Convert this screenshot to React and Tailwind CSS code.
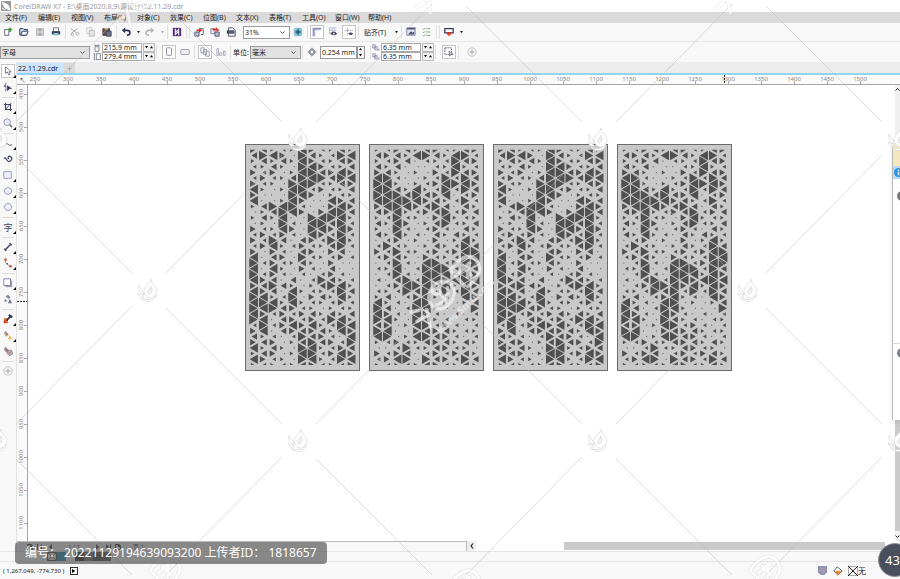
import { Fragment } from 'react';

const MENUS = ['文件(F)', '编辑(E)', '视图(V)', '布局(L)', '对象(C)', '效果(C)', '位图(B)', '文本(X)', '表格(T)', '工具(O)', '窗口(W)', '帮助(H)'];

// opening size of every triangle, one string per half row
const PANEL_A = [
    '22111321121', '23320321133', '12121321122', '11210332112', '21201332232', '12112333233', '21103331122',
    '31013312112', '20003320111', '30013200322', '12333100232', '01233202332', '12130033331', '01031033231',
    '21132033232', '12121032131', '21320221331', '12311211231', '20210220220', '30220311121', '31211210200',
    '30310210200', '31210101210', '32202013211', '22321012331', '32203111132', '33113022131', '33313111121',
    '33322110111', '32121221212', '33022121331', '13123231133', '23022222132', '21101322103', '22201232213',
    '31210331122', '12201331232', '32110331133', '11111221112',
];

const PANEL_B = [
    '11221221122', '22213321331', '11220111322', '21200011311', '22101021322', '33100113132', '33101123332',
    '33213113132', '33323223012', '33333221131', '23332232021', '22311223122', '11311023111', '21320123112',
    '10310121021', '21311021211', '01201020131', '13110121132', '21311121233', '12210211133', '01310331233',
    '11301333132', '01310333132', '10231332333', '01233323132', '11132313132', '12012311032', '31103301012',
    '32013310003', '32103210101', '33103211011', '22013312101', '33002222111', '33013322101', '11211222121',
    '00131122110', '21220121221', '12330322132', '11111221121',
];

const SCALE = [0.14, 0.36, 0.58, 0.86];

function Panel({ rows, name }) {
    const shapes = [];
    rows.forEach((row, r) => {
        [...row].forEach((size, c) => {
            const k = SCALE[Number(size)];
            const dir = (r + c) % 2 === 0 ? 1 : -1;
            const cx = 7.6 + c * 9.75 - dir * 1.6;
            const cy = 4.8 + r * 5.66;
            shapes.push(
                `M${cx - dir * 3.2 * k} ${cy - 5.6 * k}V${cy + 5.6 * k}L${cx + dir * 6.4 * k} ${cy}Z`
            );
        });
    });
    return (
        <svg role="img" aria-label={name} viewBox="0 0 113 225" className="h-[227px] w-[115px] shrink-0 border border-[#6b6b6b] bg-[#c9c9c9]">
            <clipPath id={name}>
                <path d="M3 4.800H110V219.900H3Z" />
            </clipPath>
            <path d={shapes.join('')} fill="#505050" clipPath={`url(#${name})`} />
        </svg>
    );
}

const ICONS = {
    newDoc: <><path d="M2 3h5v7H2z" fill="#fff" stroke="#555a70" /><path d="M6 3h5M8.500 1v5" stroke="#3b9b35" strokeWidth="2" /></>,
    open: <path d="M1 10V2h4l1 1h4v2H4L2 10h7l2-5" fill="#e4e8f4" stroke="#30385c" strokeWidth="1.2" />,
    save: <><path d="M2 2h8v8H2z" fill="#d5d5d8" stroke="#aaaab0" /><path d="M4 2h4v3H4zM4 7h4v3H4z" fill="#aaaab0" /></>,
    print: <><path d="M3 5V1h6v4" fill="#fff" stroke="#555a70" /><path d="M1 5h10v4H1z" fill="#30385c" /><path d="M3 7h6v3H3z" fill="#87c2bd" /></>,
    cut: <><path d="M1 2l7 5M1 8l8-6" stroke="#aaaaae" strokeWidth="1.200" /><circle cx="9" cy="8" r="1.500" stroke="#aaaaae" /><circle cx="3" cy="9" r="1.500" stroke="#aaaaae" /></>,
    copy: <><path d="M1 1h6v7H1z" stroke="#c4c4c8" /><path d="M4 4h6v7H4z" fill="#e5e5e7" stroke="#b4b4b8" /></>,
    paste: <><path d="M1 2h8v8H1z" fill="#5b5147" stroke="#463c34" /><path d="M3 1h4v2H3z" fill="#d8bc80" /><path d="M5 5h6v6H5z" fill="#6c7085" stroke="#3c4058" /></>,
    undo: <><path d="M3 4h4c5 0 5 6 0 6" stroke="#30385c" strokeWidth="2" /><path d="M1 4l4-3.500v7z" fill="#30385c" /></>,
    redo: <><path d="M9 4H5c-5 0-5 6 0 6" stroke="#b7b7bc" strokeWidth="2" /><path d="M11 4L7 .5v7z" fill="#b7b7bc" /></>,
    connect: <><path d="M1 1h10v10H1z" fill="#5a2c86" /><path d="M4 2v8M8 2v8M8 3L4 6h4l-4 3" stroke="#fff" strokeWidth="1.200" /></>,
    importing: <><path d="M1 6h5v5H1z" fill="#b8bdd1" stroke="#454b6a" /><path d="M7 2h4v7H8" fill="#fff" stroke="#454b6a" /><path d="M3 4h4" stroke="#d93025" strokeWidth="2" /><path d="M6 1l4 3-4 3z" fill="#d93025" /></>,
    exporting: <><path d="M1 2h5v6H1z" fill="#e1e4ee" stroke="#7a809c" /><path d="M6 6h5v5H6z" fill="#b8bdd1" stroke="#454b6a" /><path d="M3 3h5" stroke="#d93025" strokeWidth="2" /><path d="M7 0l4 4-3 2z" fill="#d93025" /></>,
    pdf: <><path d="M3 1h5l3 3v7H3z" fill="#fff" stroke="#33384e" /><path d="M1 4h9v4H1z" fill="#33384e" /><path d="M3 6h1M5.500 6h1M8 6h1" stroke="#fff" /></>,
    full: <><rect x="1" y="1" width="10" height="10" rx="2" fill="#8ac5dc" /><path d="M6 2v8M2 6h8" stroke="#244f70" /><path d="M4 4h4v4H4z" fill="#31617f" /></>,
    ruler: <><path d="M2 11V2h9" stroke="#8c97bd" strokeWidth="2.500" /><path d="M5 4v1M8 4v1M4 7h1M4 10h1" stroke="#9ca4c5" /></>,
    gridEye: <><path d="M1 1h9M1 4h9M1 7h4M2 1v8M5 1v7M8 1v3" stroke="#b6bbd0" /><path d="M3 8q4-5 8 0q-4 4-8 0z" fill="#41465e" /><circle cx="7" cy="8" r="1" fill="#fff" /></>,
    guideEye: <><path d="M4 1v10M1 4h10" stroke="#8990ad" strokeDasharray="2 1" /><path d="M5 8q3-3 6 0q-3 3-6 0z" fill="#41465e" /></>,
    options: <><path d="M1 1h10v9H1z" fill="#dfe3f0" stroke="#7a81a0" /><path d="M1 2h10" stroke="#50587a" strokeWidth="2" /><path d="M3 8l3-3 2 2 2-2v4H3z" fill="#50587a" /></>,
    checks: <path d="M1 2l1 1 2-2M5 2h5M1 6l1 1 2-2M5 6h5M1 10l1 1 2-2M5 10h5" stroke="#6aa06a" />,
    launcher: <><path d="M1 2h10v5H1z" fill="#fff" stroke="#30385c" strokeWidth="1.500" /><path d="M4 6h4v2h1l-3 3-3-3h1z" fill="#d93025" /><path d="M5 10l1-2 1 2-1 1z" fill="#f09a3e" /></>,
    portrait: <rect x="3" y="1" width="6" height="9" rx="1" fill="#fff" stroke="#7b7f92" />,
    landscape: <rect x="1" y="3" width="10" height="6" rx="1" fill="#f0f0f4" stroke="#8b8f9f" />,
    pages: <path d="M1 1h4v6H1zM4 3h4v6H4zM7 5h4v6H7z" fill="#fff" stroke="#8b90a4" />,
    pageRow: <path d="M1 2h2v8H1zM4 7h3v3H4zM9 5h2v5H9z" stroke="#a2a5b3" />,
    nudge: <path d="M6 1l2 2H4zM6 11L4 9h4zM1 6l2-2v4zM11 6L9 4v4zM4 4h4v4H4z" stroke="#5d6278" strokeWidth=".8" fill="#fff" />,
    dup: <path d="M1 1h4v5H1zM4 4h4v5H4zM9 7l2 3M11 7l-2 3" fill="#d9dce6" stroke="#70758a" strokeWidth=".8" />,
    treat: <><path d="M1 1h8v8H1z" stroke="#41465e" strokeDasharray="2 1" /><path d="M6 5l5 4-3 0-1 2z" fill="#fff" stroke="#41465e" strokeWidth=".8" /></>,
    plus: <><circle cx="6" cy="6" r="5" stroke="#aaa" strokeWidth=".8" /><path d="M3 6h6M6 3v6" stroke="#999" /></>,
    pageW: <path d="M3 4h6v7H3zM3 1v2M9 1v2M3 2h6" stroke="#555a70" />,
    pageH: <path d="M5 1h6v9H5zM1 1h2M1 10h2M2 1v9" stroke="#555a70" />,
    pick: <path d="M3 1v8l2-2 2 4 1.500-1L7 7h3z" fill="#fff" stroke="#6b7088" />,
    shape: <><path d="M4 1C1 4 5 6 3 11" stroke="#41465e" /><path d="M5 4l6 4H8l-3 3z" fill="#30344c" /><path d="M1 4h3v2H1z" fill="#6e7491" /></>,
    crop: <><path d="M3 1v8h8M1 3h8v8" stroke="#41465e" strokeWidth="1.300" /><path d="M3 9l7-8" stroke="#41465e" /></>,
    zoom: <><circle cx="5" cy="5" r="4" fill="#e5e9f2" stroke="#8a8fa4" /><path d="M8 8l3 3" stroke="#757a91" strokeWidth="2" /></>,
    freehand: <><path d="M1 2h4M3 0v4" stroke="#9a9fb2" /><path d="M3 8C5 4 7 11 11 8" stroke="#41465e" /></>,
    artistic: <path d="M1 5c3-2 3 4 6 4s5-4 2-6c-2-1-4 1-2 3" stroke="#41465e" strokeWidth="1.500" />,
    rect: <path d="M1 2h9v8H1z" fill="#eef0f8" stroke="#8d91a8" />,
    ellipse: <ellipse cx="6" cy="6" rx="4.500" ry="4" fill="#eef0f8" stroke="#8d91a8" />,
    polygon: <path d="M4 2h4l3 4-3 4H4L1 6z" fill="#eef0f8" stroke="#8d91a8" />,
    dimension: <path d="M3 9l6-6M1.500 8l2.500 2.500M8 1.500L10.500 4" stroke="#41465e" strokeWidth="1.800" />,
    connector: <><path d="M3 2v4l6 4" stroke="#777" strokeWidth=".8" /><circle cx="3" cy="2" r="1.600" fill="#bd5d37" /><circle cx="9" cy="10" r="1.600" fill="#bd5d37" /><circle cx="5" cy="7" r="1" fill="#41465e" /></>,
    shadow: <><path d="M3 3h8v8H3z" fill="#9a9fb5" /><path d="M1 1h8v8H1z" fill="#fff" stroke="#70768f" /></>,
    transparency: <><path d="M3 3l3-2 3 3-2 2z" fill="#838aa6" /><path d="M1 9h4L3 6zM8 6l3 5H6z" fill="#6f7895" /></>,
    dropper: <><path d="M1 5h5v6H1z" fill="#ed7623" /><path d="M1 8h2v3H1z" fill="#d92d20" /><path d="M4 8l6-6" stroke="#30344c" strokeWidth="2" /><path d="M7 1l4 3" stroke="#30344c" strokeWidth="2.500" /></>,
    fill: <><path d="M3 1l4 4-3 3-3-4z" fill="#a0a5b9" /><path d="M3 3l3 2-2 2z" fill="#c6693c" /><path d="M8 6l3 5H6z" fill="#f1b74a" /></>,
    smart: <><path d="M3 1l4 4-3 3-3-4z" fill="#848aa3" /><path d="M3 3l3 2-2 2z" fill="#c6693c" /><path d="M6 5h4l2 4-4 3-3-3z" fill="#a7b0cd" stroke="#70768f" strokeWidth=".8" /><circle cx="8" cy="8" r="1.500" fill="#d88c4f" /></>,
};

function Icon({ name, className = 'size-[10px]' }) {
    if (name === 'text') {
        return <span className="text-[9px] leading-none text-[#41465e]">字</span>;
    }
    return (
        <svg viewBox="0 0 12 12" fill="none" aria-hidden="true" className={`${className} shrink-0`}>
            {ICONS[name]}
        </svg>
    );
}

function Tool({ name, boxed }) {
    return (
        <button aria-label={name} className="flex h-4 w-4 shrink-0 items-center justify-center">
            <span className={boxed ? 'flex size-[14px] items-center justify-center border border-[#c4c4c4] bg-white' : 'flex'}>
                <Icon name={name} />
            </span>
        </button>
    );
}

function Caret({ faded }) {
    return (
        <button aria-label="more" className="flex h-4 w-2 shrink-0 items-center justify-center">
            <svg viewBox="0 0 4 3" className="w-[3px]"><path d="M0 0h4L2 3z" fill={faded ? '#aaa' : '#222'} /></svg>
        </button>
    );
}

function Sep() {
    return <span className="mx-px h-[14px] w-px shrink-0 bg-[#e0e0e0]" />;
}

function Picker({ label, value, className }) {
    return (
        <span className={`relative flex h-[13px] shrink-0 border border-[#9c9c9c] ${className}`}>
            <select aria-label={label} className="w-full appearance-none bg-transparent pl-px text-[7px] leading-[11px]">
                <option>{value}</option>
            </select>
            <svg viewBox="0 0 6 4" fill="none" className="pointer-events-none absolute right-1 top-1 w-[5px]">
                <path d="M.5.5L3 3 5.500.5" stroke="#444" />
            </svg>
        </span>
    );
}

function NumberPair({ icons, values, labels }) {
    return (
        <div className="flex shrink-0 flex-col">
            {values.map((v, i) => (
                <div key={labels[i]} className="flex h-[9px] items-center gap-px">
                    <Icon name={icons[i]} className="size-[8px]" />
                    <input aria-label={labels[i]} defaultValue={v} className="h-[9px] w-[40px] border border-[#aaa] bg-white px-px text-[7px] leading-none" />
                    <span className="flex h-[9px] w-3 items-center justify-around border border-[#bbb] bg-[#f2f2f2]">
                        <svg viewBox="0 0 4 3" className="w-[3px]"><path d="M0 0h4L2 3z" /></svg>
                        <svg viewBox="0 0 4 3" className="w-[3px]"><path d="M0 3h4L2 0z" /></svg>
                    </span>
                </div>
            ))}
        </div>
    );
}

function StandardBar() {
    return (
        <div className="flex h-[18px] items-center bg-[#f8f8f8]">
            <Tool name="newDoc" /><Tool name="open" /><Tool name="save" /><Tool name="print" />
            <Sep />
            <Tool name="cut" /><Tool name="copy" /><Tool name="paste" />
            <Sep />
            <Tool name="undo" /><Caret /><Tool name="redo" /><Caret faded />
            <Sep />
            <Tool name="connect" />
            <Sep /><Sep />
            <Tool name="importing" /><Tool name="exporting" /><Tool name="pdf" />
            <Picker label="缩放" value="31%" className="ml-1 w-[47px] bg-white" />
            <Tool name="full" />
            <Sep />
            <Tool name="ruler" boxed /><Tool name="gridEye" /><Tool name="guideEye" boxed />
            <Sep />
            <button className="ml-1 w-7 shrink-0 whitespace-nowrap text-left">贴齐(T)</button>
            <Caret />
            <Sep />
            <Tool name="options" /><Tool name="checks" />
            <Sep /><Sep />
            <Tool name="launcher" /><Caret />
        </div>
    );
}

function PropertyBar() {
    return (
        <div className="flex h-[21px] items-center border-t border-[#e6e6e6] bg-[#f8f8f8]">
            <Picker label="页面大小" value="字母" className="mr-[3px] w-[90px] bg-[#e1e1e1]" />
            <NumberPair icons={['pageW', 'pageH']} values={['215.9 mm', '279.4 mm']} labels={['宽度', '高度']} />
            <Sep />
            <div className="ml-[3px] flex"><Tool name="portrait" boxed /><Tool name="landscape" /></div>
            <Sep />
            <div className="ml-px flex"><Tool name="pages" boxed /><Tool name="pageRow" /></div>
            <Sep />
            <span className="mx-px shrink-0">单位:</span>
            <Picker label="单位" value="毫米" className="w-[51px] bg-[#e1e1e1]" />
            <Sep />
            <Tool name="nudge" />
            <span className="flex shrink-0">
                <input aria-label="微调距离" defaultValue="0.254 mm" className="h-[13px] w-[37px] border border-[#999] bg-white px-px text-[7px]" />
                <span className="flex h-[13px] w-2 flex-col items-center justify-around border border-[#999] bg-[#f2f2f2]">
                    <svg viewBox="0 0 4 3" className="w-[3px]"><path d="M0 3h4L2 0z" /></svg>
                    <svg viewBox="0 0 4 3" className="w-[3px]"><path d="M0 0h4L2 3z" /></svg>
                </span>
            </span>
            <span className="w-1 shrink-0" />
            <Sep />
            <NumberPair icons={['dup', 'dup']} values={['6.35 mm', '6.35 mm']} labels={['再制 X', '再制 Y']} />
            <Sep />
            <span className="w-1 shrink-0" />
            <Tool name="treat" boxed />
            <Sep />
            <span className="w-1 shrink-0" />
            <Tool name="plus" />
        </div>
    );
}

const TOOL_GROUPS = [
    ['pick', 'shape'],
    ['crop', 'zoom'],
    ['freehand', 'artistic', 'rect', 'ellipse', 'polygon'],
    ['text'],
    ['dimension', 'connector'],
    ['shadow', 'transparency'],
    ['dropper', 'fill', 'smart'],
    ['plus'],
];
const NO_FLYOUT = ['artistic', 'transparency', 'smart', 'plus'];

function Toolbox() {
    return (
        <aside className="flex w-[17px] shrink-0 flex-col items-center border-r border-[#e2e2e2] bg-[#f8f8f8] pt-px">
            {TOOL_GROUPS.map((group, g) => (
                <Fragment key={g}>
                    {g > 0 && <span className="mb-px mt-0.5 h-px w-3 bg-[#dcdcdc]" />}
                    {group.map((name) => (
                        <span key={name} className="relative">
                            <Tool name={name} boxed={name === 'pick'} />
                            {!NO_FLYOUT.includes(name) && (
                                <svg viewBox="0 0 3 3" className="absolute bottom-px right-0 size-[3px]"><path d="M3 0v3H0z" /></svg>
                            )}
                        </span>
                    ))}
                </Fragment>
            ))}
        </aside>
    );
}

function TopRuler() {
    const labels = Array.from({ length: 26 }, (_, i) => 250 + i * 50);
    return (
        <div className="flex h-[10px] shrink-0 overflow-hidden border-b border-[#a5a5a5] bg-[#fafafa]">
            <span className="flex w-[11px] shrink-0 items-center justify-center text-[6px]">↖</span>
            <svg className="h-[10px] min-w-0 flex-1" aria-hidden="true">
                {labels.map((n, i) => (
                    <g key={n}>
                        <text x={7 + i * 33} y="6" textAnchor="middle" fontSize="6" fill="#888">{n}</text>
                        <path d={`M${7.5 + i * 33} 6v4m6.600-1v1m6.600-1v1m6.600-1v1m6.600-1v1`} stroke="#aaa" />
                    </g>
                ))}
                <path d="M696.500 0v10" stroke="#222" strokeDasharray="2 1" />
            </svg>
        </div>
    );
}

function SideRuler() {
    const labels = Array.from({ length: 14 }, (_, i) => 450 + i * 50);
    return (
        <svg className="w-[11px] shrink-0 border-r border-[#a5a5a5] bg-[#fafafa]" aria-hidden="true">
            {labels.map((n, i) => (
                <g key={n}>
                    <text transform={`translate(6 ${9 + i * 33}) rotate(-90)`} textAnchor="middle" fontSize="6" fill="#888">{n}</text>
                    <path d={`M7 ${9.5 + i * 33}h4m-1 6.600h1m-1 6.600h1m-1 6.600h1m-1 6.600h1`} stroke="#aaa" />
                </g>
            ))}
            <path d="M0 216.500h11" stroke="#222" strokeDasharray="2 1" />
        </svg>
    );
}

function SideWindow() {
    return (
        <div className="absolute right-0 top-[58px] flex h-[277px] w-2 flex-col overflow-hidden border-l border-[#bbb] bg-white shadow-md">
            <span className="h-[23px] shrink-0 bg-[#f5e7bd]" />
            <span className="flex h-[13px] shrink-0 items-center bg-[#b8d9f5]">
                <svg viewBox="0 0 10 10" className="ml-px size-[9px] shrink-0"><circle cx="5" cy="5" r="5" fill="#2b96e5" /><path d="M5 2v1.500M5 4.500V8" stroke="#fff" strokeWidth="1.500" /></svg>
            </span>
            <span className="ml-1 mt-3 size-[10px] shrink-0 rounded-full bg-[#777]" />
            <span className="mt-[142px] h-px shrink-0 bg-[#ddd]" />
            <span className="ml-1 mt-1 size-[10px] shrink-0 rounded-full bg-[#808089]" />
        </div>
    );
}

function Workspace() {
    return (
        <main className="relative flex min-h-0 flex-1 overflow-hidden bg-white">
            <SideRuler />
            <div className="flex min-w-0 flex-1 items-start gap-[9px] pl-[217px] pt-[59px]">
                <Panel rows={PANEL_A} name="panel-1" />
                <Panel rows={PANEL_B} name="panel-2" />
                <Panel rows={PANEL_A} name="panel-3" />
                <Panel rows={PANEL_B} name="panel-4" />
            </div>
            <div className="flex w-[5px] shrink-0 flex-col items-center bg-[#f0f0f0] py-[3px]">
                <svg viewBox="0 0 5 3" fill="none" className="w-[5px]"><path d="M.5 2.500l2-2 2 2" stroke="#222" /></svg>
                <span className="mb-1 mt-auto h-[114px] w-full bg-[#cacaca]" />
                <svg viewBox="0 0 5 3" fill="none" className="w-[5px]"><path d="M.5.500l2 2 2-2" stroke="#222" /></svg>
            </div>
            <SideWindow />
        </main>
    );
}

const SWATCHES = ['bg-[#0080b0]', 'bg-white', 'bg-[#191113]', 'bg-[#666]', 'bg-[#333]', 'bg-[#444]'];

function PageArrow({ label, d }) {
    return (
        <button aria-label={label} className="flex h-2 w-[10px] items-center justify-center">
            <svg viewBox="0 0 6 6" className="size-[6px]"><path d={d} fill="#222" /></svg>
        </button>
    );
}

function PageBar() {
    return (
        <div className="flex h-[10px] shrink-0 items-center bg-white">
            <div className="flex h-full w-[450px] items-center border-r border-t border-[#bbb] bg-[#f8f8f8] pl-2 text-[6px]">
                <PageArrow label="add" d="M0 0h4l2 2v4H0zM1 1v4h4V3H3V1z" />
                <PageArrow label="first" d="M0 0h1v6H0zM5 0v6L2 3z" />
                <PageArrow label="previous" d="M5 0v6L2 3z" />
                <span className="w-[38px] text-center">1 / 1</span>
                <PageArrow label="next" d="M1 0v6l3-3z" />
                <PageArrow label="last" d="M1 0v6l3-3zM5 0h1v6H5z" />
                <PageArrow label="add after" d="M0 0h4l2 2v4H0zM1 1v4h4V3H3V1z" />
                <span className="ml-[10px]">页 1</span>
            </div>
            <button aria-label="left" className="flex h-full w-[9px] items-center justify-center bg-[#eee]">
                <svg viewBox="0 0 4 6" fill="none" className="h-[6px]"><path d="M3 .5L1 3l2 2.500" stroke="#222" strokeWidth="1.200" /></svg>
            </button>
            <span className="ml-[88px] mr-[5px] h-2 flex-1 bg-[#cacaca]" />
            <span className="w-[10px]" />
        </div>
    );
}

// flower mark that repeats over the canvas
function Flower({ x, y }) {
    return (
        <g transform={`translate(${x} ${y})`} fill="#fff" stroke="#dcdcdc" strokeWidth="0.800">
            <path d="M-3 4C-7-3 2-5 3-11c1 3 0 4 2 5 5 4 5 9 1 13-3 2-7 1-9-3z" />
            <path d="M-4 5c-3-1-6-5-5-10 1 4 5 5 5 10zM-4 7c-3 1-5-1-6-4 3 2 5 1 6 4z" />
            <path d="M-7 8c4 3 13 2 15-4 0 8-10 10-15 4z" />
            <path d="M1 4c-4-2 1-5 2-8 2 4 1 7-2 8z" fill="#f0f0f0" />
        </g>
    );
}

const MARK_STROKES = 'M-42-9l7 4M-44 2l8 1M-38 15l9-15M-11-12c-15 3-16 24 2 23S12-10-5-13c-7 0-10 6-5 9M-18 3c8 4 17 1 19-5M-7-6l-3 14M15-13c14-3 26 0 26 10s-8 15-24 14M15-12v20M20-5h14M23 4l10-9M27-8v13';

function BigMark({ x, y, url }) {
    return (
        <g transform={`translate(${x} ${y}) rotate(-43)`} opacity="0.6">
            <g fill="none" strokeLinecap="round">
                <path d={MARK_STROKES} stroke="#d4d4d4" strokeWidth="4" />
                <path d={MARK_STROKES} stroke="#fff" strokeWidth="3" />
            </g>
            {url && (
                <text x="2" y="27" textAnchor="middle" fontSize="10" fontWeight="700" fill="#fff" stroke="#dadada" strokeWidth="0.300">www.5utu.com</text>
            )}
        </g>
    );
}

const FLOWERS = [[-2, 139], [298, 139], [598, 139], [898, 139], [148, 290], [748, 290], [-2, 440], [298, 440], [598, 440], [898, 440]];
const MARKS = [[148, -10], [448, -24], [748, -24], [448, 290], [148, 590], [448, 604], [748, 590]];

function Watermark() {
    const lines = [];
    for (let row = 0; row < 4; row++) {
        for (let col = 0; col < 6; col++) {
            const x = -2 + col * 150;
            const y = -12 + row * 151;
            lines.push(
                (row + col) % 2 === 1
                    ? `M${x + 18} ${y + 18}L${x + 134} ${y + 134}`
                    : `M${x + 134} ${y + 16}L${x + 18} ${y + 134}`
            );
        }
    }
    return (
        <svg viewBox="0 0 900 579" className="pointer-events-none absolute left-0 top-0 w-[900px]" aria-hidden="true">
            <path d={lines.join('')} stroke="#bcbcbc" strokeOpacity="0.5" />
            {FLOWERS.map(([x, y]) => <Flower key={`${x}-${y}`} x={x} y={y} />)}
            {MARKS.map(([x, y]) => <BigMark key={`${x}-${y}`} x={x} y={y} url={y === 290} />)}
        </svg>
    );
}

export default function App() {
    return (
        <div className="relative flex h-screen flex-col overflow-hidden bg-[#f8f8f8] font-['Noto_Sans','Noto_Sans_CJK_SC',sans-serif] text-[7px] leading-none text-[#222]">
            <header className="flex h-3 shrink-0 items-center gap-[3px] bg-white pl-px text-[#999]">
                <svg viewBox="0 0 10 10" className="size-[10px]"><path d="M0 0h10v10H0z" fill="#999" /><path d="M1 1l6 3 2 5-5-2zM1 7l3 2" fill="#fff" stroke="#fff" /></svg>
                CorelDRAW X7 - E:\桌面2020.8.9\源设计\22.11.29.cdr
            </header>
            <nav className="flex h-[11px] shrink-0 items-center bg-[#dadada] pl-[5px]">
                {MENUS.map((m) => <button key={m} className="w-[33px] shrink-0 whitespace-nowrap text-left">{m}</button>)}
            </nav>
            <StandardBar />
            <PropertyBar />
            <div className="flex min-h-0 flex-1">
                <Toolbox />
                <div className="flex min-w-0 flex-1 flex-col">
                    <div className="flex h-[13px] shrink-0 items-end border-b-2 border-[#91d5f2] bg-[#ececec]">
                        <button className="h-[10px] w-[47px] bg-[#cce4ff] pl-px text-left">22.11.29.cdr</button>
                        <button aria-label="新建" className="h-[10px] w-[11px] bg-[#d9d9d9] text-[9px] leading-[9px] text-[#999]">+</button>
                    </div>
                    <TopRuler />
                    <Workspace />
                    <PageBar />
                </div>
            </div>
            <div className="flex h-[11px] shrink-0 items-center border-y border-[#e5e5e5] pl-[47px]">
                <svg viewBox="0 0 10 9" fill="none" className="h-[9px]"><path d="M.5.500h9v8h-9zM1 1l8 7M9 1L1 8" stroke="#333" /></svg>
                {SWATCHES.map((c) => <span key={c} className={`h-[9px] w-[9px] ${c}`} />)}
            </div>
            <footer className="flex h-[17px] shrink-0 items-center gap-[5px] pl-[3px] pr-[34px]">
                <span className="w-[62px] whitespace-nowrap text-[6px]">( 1,267.049, -774.730 )</span>
                <button aria-label="play" className="flex size-2 items-center justify-center border border-[#333]">
                    <svg viewBox="0 0 4 5" className="h-[4px]"><path d="M0 0l4 2.500L0 5z" /></svg>
                </button>
                <svg viewBox="0 0 10 10" className="ml-auto mr-px size-[9px]"><path d="M0 0h10v7L7 10H3L0 7z" fill="#8f95b3" /><path d="M2 3h6M2 5h6M3 7h4" stroke="#b5a0ae" /></svg>
                <svg viewBox="0 0 12 12" className="size-[10px]"><path d="M5 1l6 5-5 5-5-5z" fill="#fff" stroke="#444" /><path d="M2 6h8l-4 5z" fill="#ed872d" /></svg>
                <span className="flex items-center">
                    <svg viewBox="0 0 10 10" fill="none" className="size-[10px]"><path d="M.5.500h9v9h-9z" stroke="#aaa" /><path d="M0 0l10 10M10 0L0 10" stroke="#222" /></svg>
                    <span className="text-[8px]">无</span>
                </span>
            </footer>
            <Watermark />
            <div className="absolute bottom-[15px] left-[15px] flex h-[22px] items-center whitespace-pre rounded-sm bg-[#595959]/70 px-[10px] text-[12px] text-white">
                {'编号： 20221129194639093200 上传者ID： 1818657'}
            </div>
            <div className="absolute bottom-0.5 -right-3 flex size-[34px] items-center rounded-full border border-[#8d929c] bg-[#4a4f5c] pl-[6px] text-[13px] text-white">
                43
            </div>
        </div>
    );
}
